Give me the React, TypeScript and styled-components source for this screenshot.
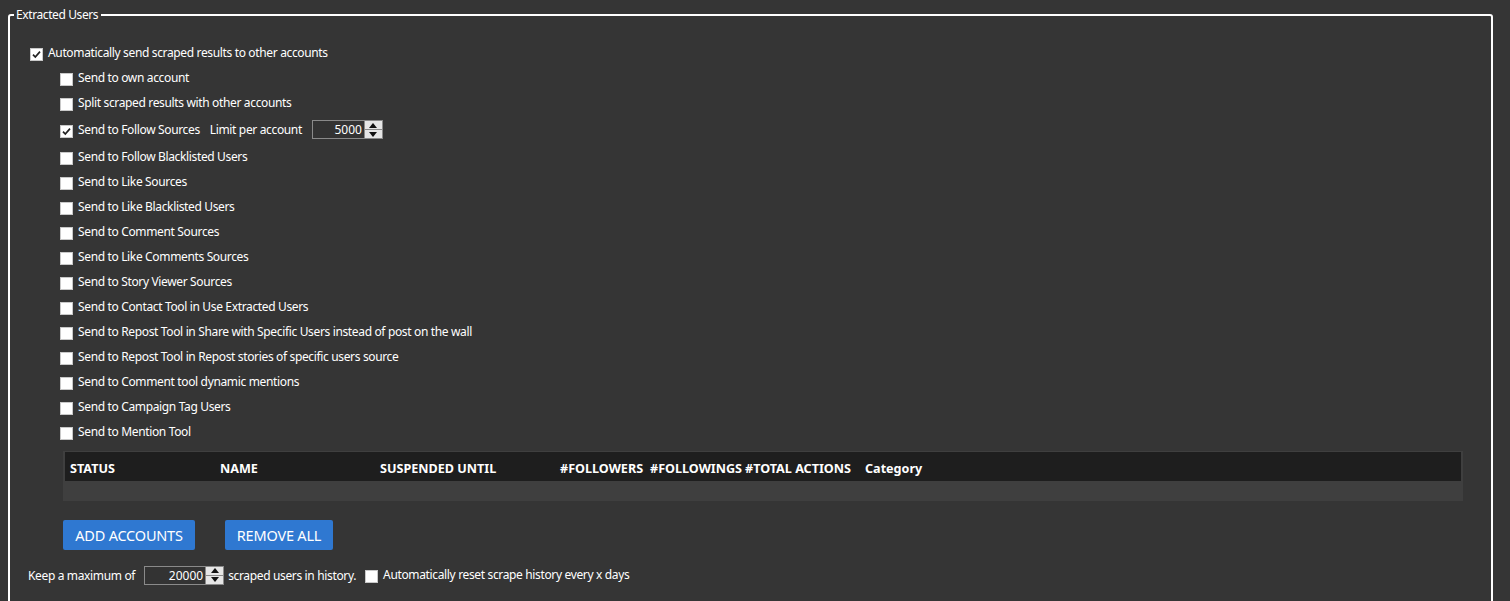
import React from "react";
import styled, { createGlobalStyle } from "styled-components";

const Global = createGlobalStyle`
  html, body { margin: 0; padding: 0; background: #353535; }
  body { font-family: "Noto Sans", "Open Sans", sans-serif; color: #fff; overflow: hidden; }
  * { box-sizing: border-box; }
`;

const Page = styled.div`
  width: 1510px;
  height: 601px;
  background: #353535;
  padding: 7px 17px 0 8px;
  overflow: hidden;
`;

const Group = styled.fieldset`
  margin: 0;
  border: 2px solid #ffffff;
  border-radius: 3px;
  padding: 17px 20px 40px 20px;
  min-width: 0;
`;

const Legend = styled.legend`
  font-size: 12px;
  line-height: 16px;
  letter-spacing: -0.4px;
  padding: 0 3px 0 2px;
  margin-left: -16px;
  color: #fff;
`;

const Row = styled.div<{ $h?: number; $indent?: number }>`
  display: flex;
  align-items: center;
  height: ${(p) => p.$h ?? 25}px;
  padding-left: ${(p) => p.$indent ?? 0}px;
  font-size: 12px;
  letter-spacing: -0.35px;
  color: #fff;
  white-space: nowrap;
`;

const Box = styled.span`
  width: 13px;
  height: 13px;
  flex: none;
  background: #fff;
  border: 1px solid #c8c8c8;
  margin-right: 5px;
  margin-top: 3px;
  display: inline-flex;
  align-items: center;
  justify-content: center;
`;

const Label = styled.span`
  line-height: 16px;
`;

const Check = ({ checked }: { checked?: boolean }) => (
  <Box>
    {checked && (
      <svg width="11" height="11" viewBox="0 0 11 11">
        <path d="M2 5.6 L4.3 8 L9 2.6" stroke="#222" strokeWidth="1.7" fill="none" />
      </svg>
    )}
  </Box>
);

const SpinWrap = styled.span<{ $w: number }>`
  display: inline-flex;
  height: 19px;
  width: ${(p) => p.$w}px;
  border: 1px solid #8a8a8a;
  background: #333;
  letter-spacing: 0;
`;

const SpinValue = styled.span`
  flex: 1;
  text-align: right;
  font-size: 12px;
  line-height: 17px;
  padding-right: 2px;
  color: #fff;
`;

const SpinButtons = styled.span`
  width: 18px;
  display: flex;
  flex-direction: column;
  gap: 1px;
  background: #8a8a8a;
  border-left: 1px solid #8a8a8a;
`;

const SpinBtn = styled.span`
  flex: 1;
  background: #e6e6e6;
  display: flex;
  align-items: center;
  justify-content: center;
`;

const Spinner = ({ value, width }: { value: string; width: number }) => (
  <SpinWrap $w={width}>
    <SpinValue>{value}</SpinValue>
    <SpinButtons>
      <SpinBtn>
        <svg width="8" height="5" viewBox="0 0 8 5"><path d="M0 5 L4 0 L8 5Z" fill="#111" /></svg>
      </SpinBtn>
      <SpinBtn>
        <svg width="8" height="5" viewBox="0 0 8 5"><path d="M0 0 L4 5 L8 0Z" fill="#111" /></svg>
      </SpinBtn>
    </SpinButtons>
  </SpinWrap>
);

const Inline = styled.span<{ $ml?: number; $mr?: number }>`
  margin-left: ${(p) => p.$ml ?? 0}px;
  margin-right: ${(p) => p.$mr ?? 0}px;
`;

const Table = styled.div`
  margin: 7px 0 0 33px;
  width: 1400px;
  background: #3f3f3f;
  padding: 1px 2px 0 2px;
`;

const HeadRow = styled.div`
  display: grid;
  grid-template-columns: 150px 160px 180px 90px 95px 120px 1fr;
  height: 29px;
  align-items: center;
  background: #1e1e1e;
  padding: 3px 0 0 5px;
`;

const HeadCell = styled.span`
  font-size: 12.6px;
  font-weight: 700;
  color: #fff;
  white-space: nowrap;
`;

const Body = styled.div`
  height: 20px;
`;

const Buttons = styled.div`
  display: flex;
  gap: 30px;
  margin: 19px 0 0 33px;
`;

const Button = styled.button<{ $w: number }>`
  height: 30px;
  width: ${(p) => p.$w}px;
  padding: 0;
  background: #2f78d1;
  color: #fff;
  border: none;
  border-radius: 2px;
  font-family: inherit;
  font-size: 14.5px;
  letter-spacing: -0.2px;
`;

const cols = ["STATUS", "NAME", "SUSPENDED UNTIL", "#FOLLOWERS", "#FOLLOWINGS", "#TOTAL ACTIONS", "Category"];

const items = [
  "Send to own account",
  "Split scraped results with other accounts",
  "__follow",
  "Send to Follow Blacklisted Users",
  "Send to Like Sources",
  "Send to Like Blacklisted Users",
  "Send to Comment Sources",
  "Send to Like Comments Sources",
  "Send to Story Viewer Sources",
  "Send to Contact Tool in Use Extracted Users",
  "Send to Repost Tool in Share with Specific Users instead of post on the wall",
  "Send to Repost Tool in Repost stories of specific users source",
  "Send to Comment tool dynamic mentions",
  "Send to Campaign Tag Users",
  "Send to Mention Tool",
];

export default function App() {
  return (
    <Page>
      <Global />
      <Group>
        <Legend>Extracted Users</Legend>
        <Row>
          <Check checked />
          <Label>Automatically send scraped results to other accounts</Label>
        </Row>
        {items.map((t) =>
          t === "__follow" ? (
            <Row key={t} $indent={30} $h={29}>
              <Check checked />
              <Label>Send to Follow Sources</Label>
              <Inline $ml={10} $mr={10}>Limit per account</Inline>
              <Spinner value="5000" width={71} />
            </Row>
          ) : (
            <Row key={t} $indent={30}>
              <Check />
              <Label>{t}</Label>
            </Row>
          )
        )}
        <Table>
          <HeadRow>
            {cols.map((c) => (
              <HeadCell key={c}>{c}</HeadCell>
            ))}
          </HeadRow>
          <Body />
        </Table>
        <Buttons>
          <Button $w={132}>ADD ACCOUNTS</Button>
          <Button $w={108}>REMOVE ALL</Button>
        </Buttons>
        <Row $h={50}>
          <Inline $ml={-2} $mr={9}>Keep a maximum of</Inline>
          <Spinner value="20000" width={80} />
          <Inline $ml={4} $mr={9}>scraped users in history.</Inline>
          <Check />
          <Label>Automatically reset scrape history every x days</Label>
        </Row>
      </Group>
    </Page>
  );
}
